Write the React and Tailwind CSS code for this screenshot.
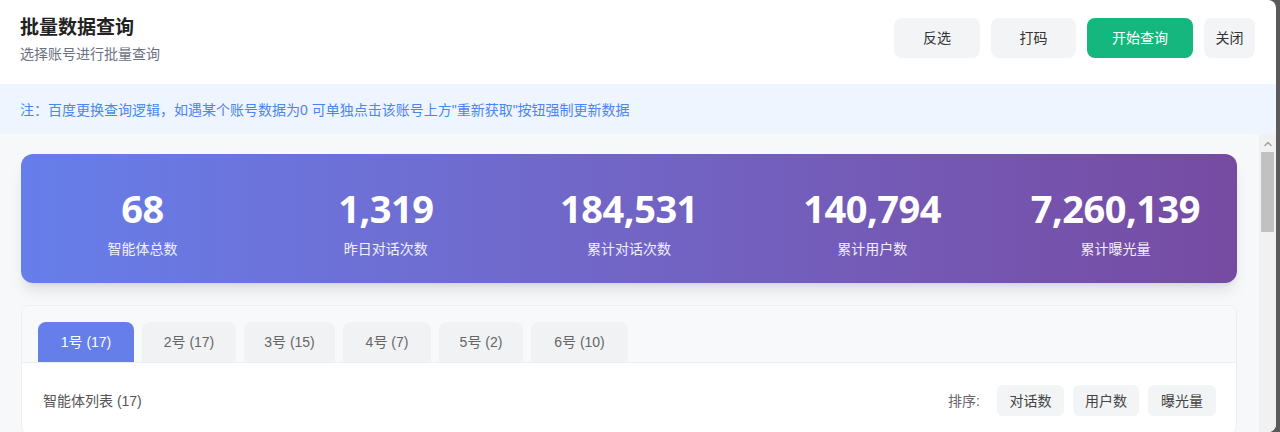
import { ChevronUp } from 'lucide-react';

const stats = [
  { value: '68', label: '智能体总数' },
  { value: '1,319', label: '昨日对话次数' },
  { value: '184,531', label: '累计对话次数' },
  { value: '140,794', label: '累计用户数' },
  { value: '7,260,139', label: '累计曝光量' },
];

const tabs = [
  { label: '1号 (17)', w: 'w-[96px]' },
  { label: '2号 (17)', w: 'w-[94px]' },
  { label: '3号 (15)', w: 'w-[91px]' },
  { label: '4号 (7)', w: 'w-[88px]' },
  { label: '5号 (2)', w: 'w-[84px]' },
  { label: '6号 (10)', w: 'w-[97px]' },
];

const sorts = [
  { label: '对话数', w: 'w-[67px]' },
  { label: '用户数', w: 'w-[66px]' },
  { label: '曝光量', w: 'w-[68px]' },
];

const font = { fontFamily: '"Liberation Sans", "Noto Sans CJK SC", sans-serif' };

export default function App() {
  return (
    <div className="w-[1280px] h-[432px] bg-[#5a5a5a] overflow-hidden" style={font}>
      <div className="w-[1276px] h-[432px] bg-white rounded-r-lg flex flex-col overflow-hidden">
        {/* header */}
        <div className="h-[84px] shrink-0 flex items-start justify-between pl-5 pr-[21px]">
          <div className="pt-[14px]">
            <h1 className="text-[19px] leading-[28px] font-bold text-[#222]">批量数据查询</h1>
            <p className="text-[14px] leading-5 text-gray-500 mt-[2px]">选择账号进行批量查询</p>
          </div>
          <div className="flex items-center gap-2.5 pt-[18px]">
            <button className="w-[86px] h-10 rounded-lg bg-[#f3f4f6] text-sm text-[#333]">反选</button>
            <button className="w-[85px] h-10 rounded-lg bg-[#f3f4f6] text-sm text-[#333] ml-[1px]">打码</button>
            <button className="w-[106px] h-10 rounded-lg bg-[#16b77f] text-sm text-white ml-[1px]">开始查询</button>
            <button className="w-[51px] h-10 rounded-lg bg-[#f3f4f6] text-sm text-[#333] ml-[1px]">关闭</button>
          </div>
        </div>

        {/* notice */}
        <div className="h-[50px] shrink-0 bg-[#eef5fe] px-5 flex items-center pt-[2px]">
          <p className="text-[14px] text-[#4a86f0]">
            注：百度更换查询逻辑，如遇某个账号数据为0 可单独点击该账号上方"重新获取"按钮强制更新数据
          </p>
        </div>

        {/* body */}
        <div className="flex-1 flex min-h-0 bg-[#f7f8fa]">
          <div className="flex-1 pl-[21px] pr-[22px] pt-5 overflow-hidden">
            <div className="h-[129px] rounded-xl bg-gradient-to-r from-[#667eea] to-[#764ba2] shadow-lg grid grid-cols-5 items-center pt-[8px]">
              {stats.map((s) => (
                <div key={s.label} className="flex flex-col items-center text-white">
                  <span
                    className="text-[38px] leading-[44px] font-bold tracking-[-0.5px]"
                    style={{ fontFamily: '"Noto Sans", "Open Sans", sans-serif' }}
                  >
                    {s.value}
                  </span>
                  <span className="text-sm text-white/90 mt-[9px]">{s.label}</span>
                </div>
              ))}
            </div>

            <div className="mt-[22px] bg-white border border-[#eceef2] rounded-lg overflow-hidden">
              <div className="bg-[#f8f9fb] border-b border-[#eceef2] px-4 pt-[16px] flex gap-2">
                {tabs.map((t, i) => (
                  <div
                    key={t.label}
                    className={
                      t.w +
                      ' h-10 rounded-t-lg flex items-center justify-center text-sm ' +
                      (i === 0 ? 'bg-[#667eea] text-white' : 'bg-[#f1f2f4] text-[#666]')
                    }
                  >
                    {t.label}
                  </div>
                ))}
              </div>
              <div className="flex items-center justify-between pl-[21px] pr-5 pt-[22px] pb-4">
                <span className="text-sm text-[#555]">智能体列表 (17)</span>
                <div className="flex items-center gap-[9px]">
                  <span className="text-sm text-[#666] mr-[8px]">排序:</span>
                  {sorts.map((s) => (
                    <button
                      key={s.label}
                      className={s.w + ' h-[31px] rounded-md bg-[#f3f4f6] text-sm text-[#444]'}
                    >
                      {s.label}
                    </button>
                  ))}
                </div>
              </div>
              <div className="mx-4 border-t border-[#eceef2]" />
            </div>
          </div>

          {/* scrollbar */}
          <div className="w-[17px] shrink-0 bg-[#f1f1f1] flex flex-col items-center">
            <ChevronUp className="w-3 h-3 text-[#a3a3a3] mt-1" strokeWidth={3} />
            <div className="w-[13px] h-[80px] bg-[#c1c1c1] mt-[2px]" />
          </div>
        </div>
      </div>
    </div>
  );
}
